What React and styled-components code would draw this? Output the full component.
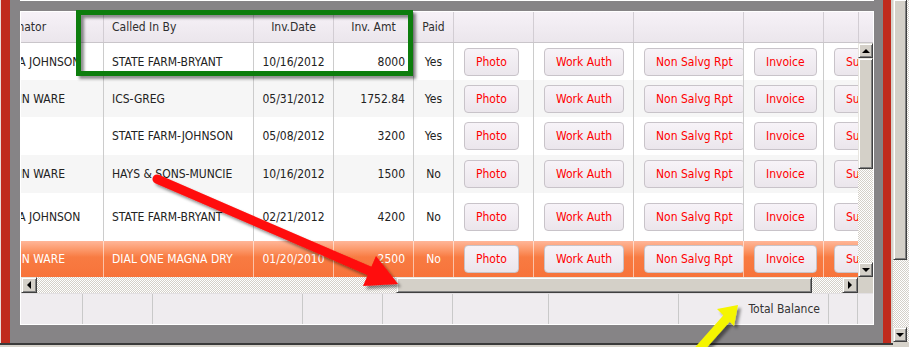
import React, { useLayoutEffect, useRef } from 'react';
import styled, { createGlobalStyle, css } from 'styled-components';

const FONT = `"DejaVu Sans Condensed", "Liberation Sans", Arial, sans-serif`;
const SCROLL_X = 27;

const GlobalStyle = createGlobalStyle`
  html, body { margin: 0; padding: 0; width: 909px; height: 347px; overflow: hidden; background: #868486; }
  body { font-family: ${FONT}; font-size: 12px; }
  *, *::before, *::after { box-sizing: border-box; }
`;

const Screen = styled.div`
  position: relative;
  width: 909px;
  height: 347px;
  display: flex;
  overflow: hidden;
`;

const Workspace = styled.div`
  flex: 1;
  min-width: 0;
  display: flex;
  flex-direction: column;
`;

const WorkRow = styled.div`
  flex: 1;
  display: flex;
`;

const EdgeStrip = styled.div`
  flex: 0 0 ${(p) => p.$w}px;
  background: ${(p) => p.$c};
`;

const BottomStrip = styled.div`
  flex: 0 0 4px;
  border-top: 2px solid #3a3a3a;
  background: #d6d2ca;
`;

const Frame = styled.div`
  flex: 1;
  min-width: 0;
  background: #868486;
  display: flex;
  flex-direction: column;
  padding: 0 9px 18px 10px;
`;

const TopRule = styled.div`
  height: 1px;
  background: #fff;
  margin-bottom: 10px;
`;

const Panel = styled.div`
  border: 1px solid #fff;
  display: flex;
  flex-direction: column;
  background: #fff;
`;

/* ---------- header ---------- */
const HeaderBand = styled.div`
  display: flex;
  height: 31px;
  border-bottom: 1px solid #c9c5ca;
  background: linear-gradient(#f6f1f7, #ebe6ec);
`;

const Viewport = styled.div`
  flex: 1;
  min-width: 0;
  overflow: hidden;
`;

const Track = styled.div`
  width: max-content;
`;

const HeaderLine = styled.div`
  display: flex;
  height: 30px;
`;

const HeadCell = styled.div`
  flex: 0 0 ${(p) => p.$w}px;
  display: flex;
  align-items: center;
  justify-content: ${(p) => p.$align || 'flex-start'};
  padding: 0 8px 0 ${(p) => (p.$tight ? 0 : 8)}px;
  border-right: 1px solid #d2cdd3;
  color: #2e2e2e;
  white-space: nowrap;
  overflow: hidden;
`;

const HeaderFiller = styled.div`
  flex: 0 0 15px;
  border-left: 1px solid #d2cdd3;
`;

/* ---------- body ---------- */
const BodyBand = styled.div`
  display: flex;
  height: 234px;
`;

const Row = styled.div`
  display: flex;
  height: ${(p) => p.$h}px;
  background: ${(p) => (p.$selected ? 'linear-gradient(#ffb699 0%, #fc9b6e 22%, #f87b42 45%, #f7733a 100%)' : p.$alt ? '#f6f6f6' : '#fff')};
  color: ${(p) => (p.$selected ? '#fff' : '#222')};
`;

const Cell = styled.div`
  flex: 0 0 ${(p) => p.$w}px;
  display: flex;
  align-items: center;
  justify-content: ${(p) => p.$align || 'flex-start'};
  padding: ${(p) => (p.$button ? '0 0 0 10px' : '0 8px')};
  border-right: 1px solid ${(p) => (p.$selected ? 'rgba(255,255,255,0.55)' : '#cccccc')};
  white-space: nowrap;
  overflow: hidden;
`;

const GridButton = styled.button`
  height: 28px;
  padding: 0 11px;
  font-family: ${FONT};
  font-size: 12px;
  color: #ff0000;
  background: linear-gradient(#f7f3f8, #ebe6ec);
  border: 1px solid #c8c3c9;
  border-radius: 4px;
  white-space: nowrap;
  cursor: pointer;
`;

/* ---------- classic scrollbars ---------- */
const checker = css`
  background-color: #fff;
  background-image: repeating-conic-gradient(#d4d0c8 0 25%, #ffffff 0 50%);
  background-size: 2px 2px;
`;

const bevel = css`
  background: #d4d0c8;
  border: 1px solid;
  border-color: #e8e6e0 #404040 #404040 #e8e6e0;
  box-shadow: inset 1px 1px #ffffff, inset -1px -1px #808080;
`;

const VScroll = styled.div`
  flex: 0 0 15px;
  display: flex;
  flex-direction: column;
  ${checker};
`;

const ScrollButton = styled.div`
  flex: 0 0 ${(p) => p.$size}px;
  display: flex;
  align-items: center;
  justify-content: center;
  ${bevel};
`;

const Thumb = styled.div`
  flex: 0 0 ${(p) => p.$size}px;
  ${bevel};
`;

const TrackGap = styled.div`
  flex: ${(p) => (p.$size ? `0 0 ${p.$size}px` : '1')};
`;

const Arrow = styled.span`
  width: 0;
  height: 0;
  border-style: solid;
  ${(p) =>
    p.$dir === 'up'
      ? 'border-width: 0 4px 4px 4px; border-color: transparent transparent #000 transparent;'
      : p.$dir === 'down'
      ? 'border-width: 4px 4px 0 4px; border-color: #000 transparent transparent transparent;'
      : p.$dir === 'left'
      ? 'border-width: 4px 4px 4px 0; border-color: transparent #000 transparent transparent;'
      : 'border-width: 4px 0 4px 4px; border-color: transparent transparent transparent #000;'}
`;

const HScrollBand = styled.div`
  display: flex;
  height: 16px;
`;

const HScroll = styled.div`
  flex: 1;
  display: flex;
  ${checker};
`;

const Corner = styled.div`
  flex: 0 0 15px;
  background: #d4d0c8;
`;

/* ---------- footer ---------- */
const FooterRow = styled.div`
  display: flex;
  height: 31px;
  background: #efecef;
  border-top: 1px solid #e2dfe2;
`;

const FootCell = styled.div`
  flex: 0 0 ${(p) => p.$w}px;
  display: flex;
  align-items: center;
  justify-content: flex-end;
  padding: 0 8px;
  border-right: ${(p) => (p.$last ? 'none' : '1px solid #c9c9c9')};
  color: #333;
  white-space: nowrap;
`;

/* ---------- outer page scrollbar ---------- */
const OuterScroll = styled.div`
  flex: 0 0 16px;
  display: flex;
  flex-direction: column;
  align-items: flex-start;
  ${checker};
`;

const OuterThumb = styled.div`
  width: 14px;
  flex: 0 0 260px;
  ${bevel};
  border-top: none;
`;

const OuterButton = styled.div`
  width: 14px;
  flex: 0 0 15px;
  display: flex;
  align-items: center;
  justify-content: center;
  ${bevel};
`;

const OuterFoot = styled.div`
  align-self: stretch;
  flex: 0 0 5px;
  background: #d6d2ca;
`;

/* ---------- annotation overlay ---------- */
const Overlay = styled.svg`
  position: absolute;
  left: 0;
  top: 0;
  pointer-events: none;
`;

const columns = [
  { key: 'est', label: 'Estimator', w: 83 + SCROLL_X, tight: true },
  { key: 'by', label: 'Called In By', w: 150 },
  { key: 'date', label: 'Inv.Date', w: 80, align: 'center' },
  { key: 'amt', label: 'Inv. Amt', w: 80, align: 'center', dataAlign: 'flex-end' },
  { key: 'paid', label: 'Paid', w: 40, align: 'center' },
  { key: 'b1', label: '', w: 80, button: 'Photo' },
  { key: 'b2', label: '', w: 100, button: 'Work Auth' },
  { key: 'b3', label: '', w: 110, button: 'Non Salvg Rpt' },
  { key: 'b4', label: '', w: 80, button: 'Invoice' },
  { key: 'b5', label: '', w: 100, button: 'Supplement' },
];

const rows = [
  { est: 'LISA JOHNSON', by: 'STATE FARM-BRYANT', date: '10/16/2012', amt: '8000', paid: 'Yes', h: 37 },
  { est: 'JOHN WARE', by: 'ICS-GREG', date: '05/31/2012', amt: '1752.84', paid: 'Yes', h: 37 },
  { est: '', by: 'STATE FARM-JOHNSON', date: '05/08/2012', amt: '3200', paid: 'Yes', h: 38 },
  { est: 'JOHN WARE', by: 'HAYS & SONS-MUNCIE', date: '10/16/2012', amt: '1500', paid: 'No', h: 38 },
  { est: 'LISA JOHNSON', by: 'STATE FARM-BRYANT', date: '02/21/2012', amt: '4200', paid: 'No', h: 48 },
  { est: 'JOHN WARE', by: 'DIAL ONE MAGNA DRY', date: '01/20/2010', amt: '2500', paid: 'No', h: 36, selected: true },
];

const footerCells = [62, 70, 150, 80, 70, 96, 130, 150, 29];

function Annotations() {
  return (
    <Overlay width="909" height="347" viewBox="0 0 909 347">
      <defs>
        <filter id="drop" x="-20%" y="-20%" width="140%" height="140%">
          <feDropShadow dx="3" dy="3" stdDeviation="1.4" floodColor="#000" floodOpacity="0.45" />
        </filter>
      </defs>
      <rect x="78.5" y="12.5" width="332" height="61" fill="none" stroke="#0f7d10" strokeWidth="5" filter="url(#drop)" />
      <g filter="url(#drop)">
        <line x1="157" y1="179" x2="372" y2="272" stroke="#ff0a0a" strokeWidth="9" strokeLinecap="round" />
        <polygon points="398,284 363,286 376,256" fill="#ff0a0a" />
      </g>
      <g filter="url(#drop)">
        <line x1="688" y1="362" x2="727" y2="318" stroke="#f5f500" strokeWidth="9" />
        <polygon points="738,305 717,309 734,326" fill="#f5f500" />
      </g>
    </Overlay>
  );
}

export default function App() {
  const headRef = useRef(null);
  const bodyRef = useRef(null);

  useLayoutEffect(() => {
    if (headRef.current) headRef.current.scrollLeft = SCROLL_X;
    if (bodyRef.current) bodyRef.current.scrollLeft = SCROLL_X;
  }, []);

  return (
    <>
      <GlobalStyle />
      <Screen>
        <Workspace>
          <WorkRow>
            <EdgeStrip $w={1} $c="#eadbd8" />
            <EdgeStrip $w={9} $c="#c02b1d" />
            <Frame>
              <TopRule />
              <Panel>
                <HeaderBand>
                  <Viewport ref={headRef}>
                    <Track>
                      <HeaderLine>
                        {columns.map((c) => (
                          <HeadCell key={c.key} $w={c.w} $align={c.align} $tight={c.tight}>
                            {c.label}
                          </HeadCell>
                        ))}
                      </HeaderLine>
                    </Track>
                  </Viewport>
                  <HeaderFiller />
                </HeaderBand>

                <BodyBand>
                  <Viewport ref={bodyRef}>
                    <Track>
                      {rows.map((r, i) => (
                        <Row key={i} $h={r.h} $alt={i % 2 === 1} $selected={r.selected}>
                          {columns.map((c) => (
                            <Cell
                              key={c.key}
                              $w={c.w}
                              $align={c.button ? 'flex-start' : c.dataAlign || c.align}
                              $button={!!c.button}
                              $selected={r.selected}
                            >
                              {c.button ? <GridButton type="button">{c.button}</GridButton> : r[c.key]}
                            </Cell>
                          ))}
                        </Row>
                      ))}
                    </Track>
                  </Viewport>
                  <VScroll>
                    <ScrollButton $size={15}>
                      <Arrow $dir="up" />
                    </ScrollButton>
                    <Thumb $size={111} />
                    <TrackGap />
                    <ScrollButton $size={15}>
                      <Arrow $dir="down" />
                    </ScrollButton>
                  </VScroll>
                </BodyBand>

                <HScrollBand>
                  <HScroll>
                    <ScrollButton $size={16}>
                      <Arrow $dir="left" />
                    </ScrollButton>
                    <TrackGap $size={359} />
                    <Thumb $size={416} />
                    <TrackGap />
                    <ScrollButton $size={16}>
                      <Arrow $dir="right" />
                    </ScrollButton>
                  </HScroll>
                  <Corner />
                </HScrollBand>

                <FooterRow>
                  {footerCells.map((w, i) => (
                    <FootCell key={i} $w={w}>
                      {i === 7 ? 'Total Balance' : ''}
                    </FootCell>
                  ))}
                  <FootCell $w={15} $last />
                </FooterRow>
              </Panel>
            </Frame>
            <EdgeStrip $w={8} $c="#c02b1d" />
            <EdgeStrip $w={2} $c="#d6d2ca" />
          </WorkRow>
          <BottomStrip />
        </Workspace>
        <OuterScroll>
          <OuterThumb />
          <TrackGap />
          <OuterButton>
            <Arrow $dir="down" />
          </OuterButton>
          <OuterFoot />
        </OuterScroll>
        <Annotations />
      </Screen>
    </>
  );
}
